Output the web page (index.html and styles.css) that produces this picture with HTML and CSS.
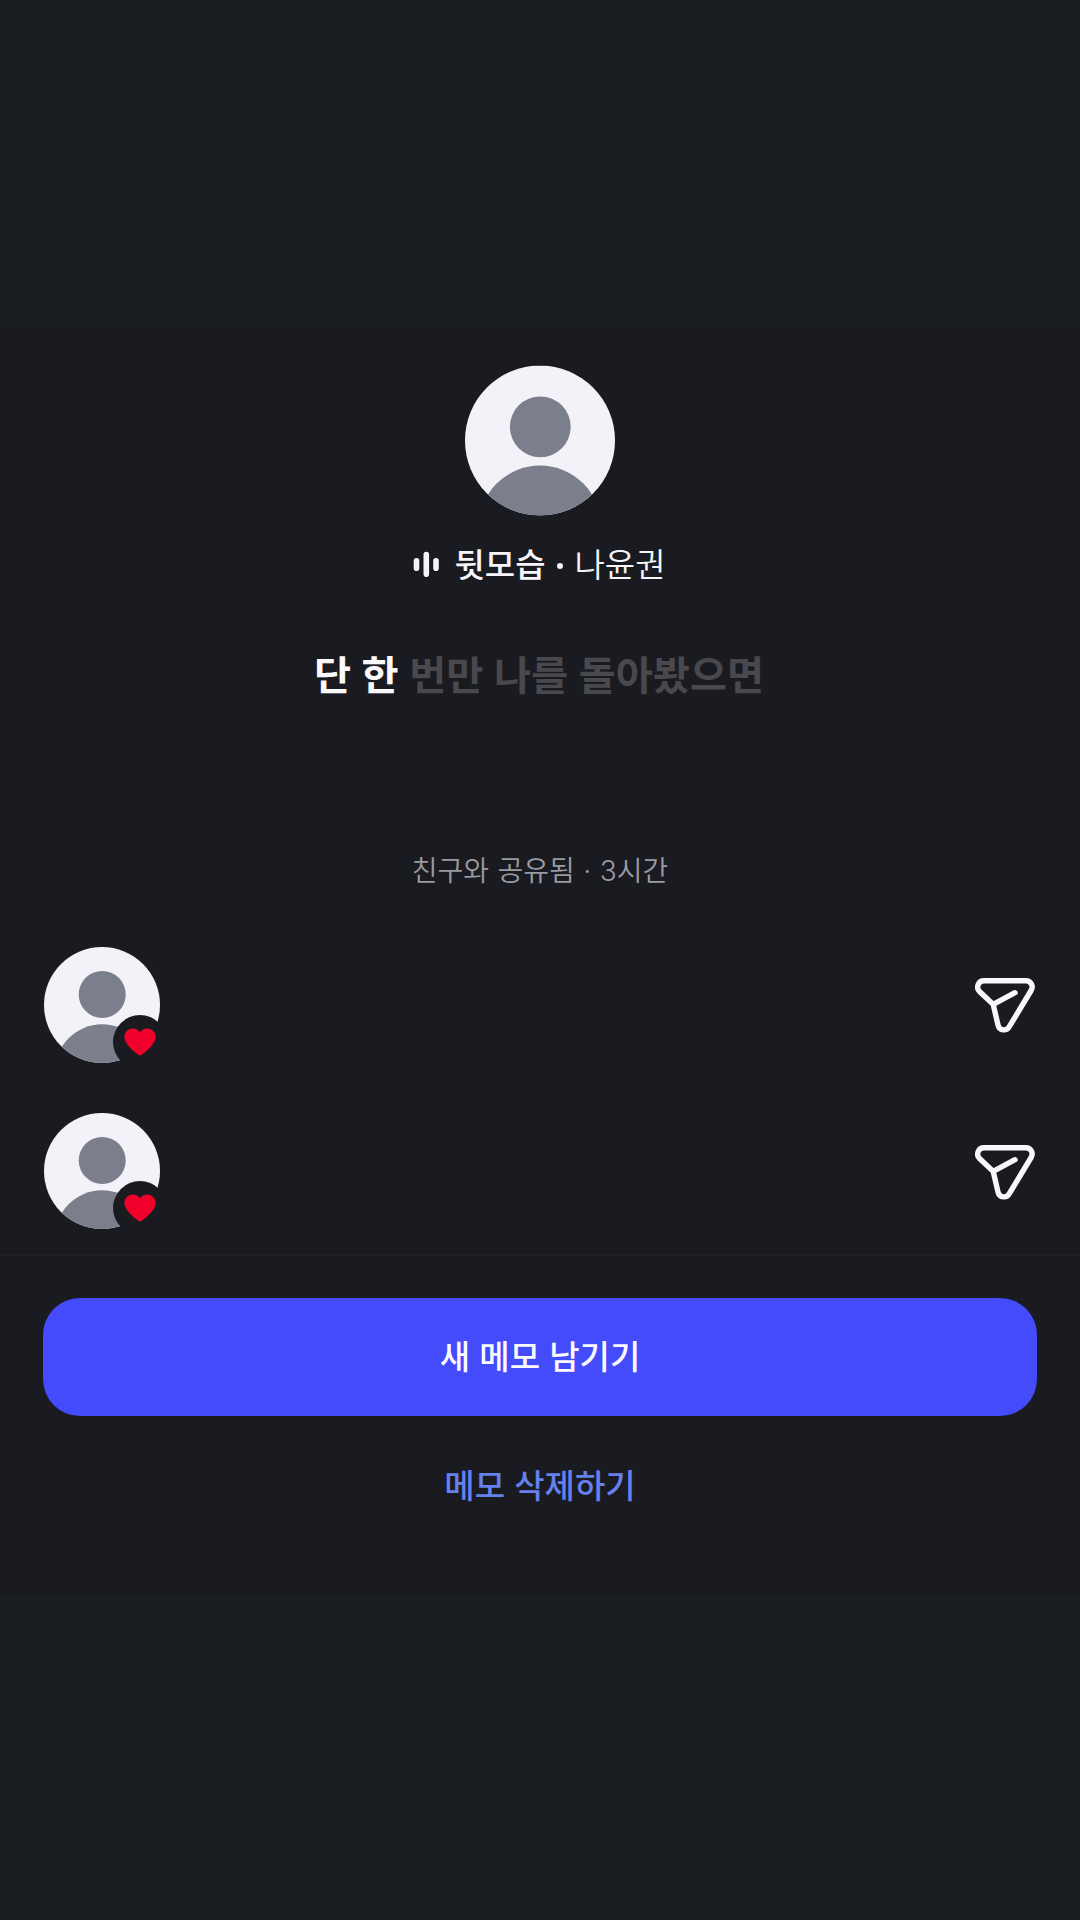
FILE: index.html
```html
<!DOCTYPE html>
<html lang="ko">
<head>
<meta charset="utf-8">
<title>메모</title>
<link rel="stylesheet" href="styles.css">
</head>
<body>
<svg class="defs" aria-hidden="true">
  <symbol id="person" viewBox="0 0 150 150">
    <clipPath id="round"><circle cx="75" cy="75" r="75"/></clipPath>
    <g clip-path="url(#round)">
      <rect width="150" height="150" fill="#f3f2f8"/>
      <circle cx="75.3" cy="61.3" r="30.4" fill="#7b7e8b"/>
      <circle cx="75" cy="161" r="61" fill="#7b7e8b"/>
    </g>
  </symbol>
  <symbol id="send" viewBox="0 0 60 55">
    <path d="M9 2.8H51C56 2.8 58.7 8.2 56.1 12.5L34.3 48.7C31.5 53.5 24.5 52.8 23.1 47.3L18.2 26.4L4.5 13.5C0.6 9.4 3.4 2.8 9 2.8ZM18.2 26.4L40 14.7" fill="none" stroke="#f8f8fc" stroke-width="5.4" stroke-linecap="round" stroke-linejoin="round"/>
  </symbol>
  <symbol id="heart" viewBox="0 0 32 28">
    <path d="M16 27.5C14.5 27.5 1 17.5 .5 9.5C.2 4 4 .5 8.5 .5C12 .5 14.500 2 16 4.500C17.500 2 20 .5 23.500 .5C28 .5 31.800 4 31.500 9.500C31 17.500 17.500 27.500 16 27.500Z" fill="#f1002c"/>
  </symbol>
</svg>
<main class="sheet">
  <svg class="avatar avatar-large"><use href="#person"/></svg>
  <div class="track">
    <svg class="wave" viewBox="0 0 26 26"><path d="M3.500 9.800V17.200M13.300 3.500V23.300M23 9.800V17.200" stroke="#f5f5f9" stroke-width="5.600" stroke-linecap="round"/></svg>
    <span class="song">뒷모습</span><span class="dot"></span><span class="artist">나윤권</span>
  </div>
  <p class="lyric"><span class="sung">단 한</span> 번만 나를 돌아봤으면</p>
  <p class="meta">친구와 공유됨 · 3시간</p>
  <ul class="friends">
    <li class="friend">
      <div class="reaction"><svg class="avatar"><use href="#person"/></svg><span class="badge"><svg class="heart"><use href="#heart"/></svg></span></div>
      <svg class="send"><use href="#send"/></svg>
    </li>
    <li class="friend">
      <div class="reaction"><svg class="avatar"><use href="#person"/></svg><span class="badge"><svg class="heart"><use href="#heart"/></svg></span></div>
      <svg class="send"><use href="#send"/></svg>
    </li>
  </ul>
  <footer class="actions">
    <button class="primary">새 메모 남기기</button>
    <button class="remove">메모 삭제하기</button>
  </footer>
</main>
</body>
</html>
```
FILE: styles.css
```css
* { box-sizing: border-box; margin: 0; padding: 0; }
body {
  height: 1920px;
  padding-top: 328px;
  background: #1a1e20;
  color: #f5f5f9;
  font-family: "Noto Sans CJK KR", sans-serif;
  overflow: hidden;
}
.defs { position: absolute; width: 0; height: 0; }
.sheet {
  display: flex;
  flex-direction: column;
  align-items: center;
  height: 1269px;
  padding-top: 37px;
  background: #1a1b20;
}
.avatar { display: block; width: 116px; height: 116px; }
.avatar-large { width: 150px; height: 151px; }
.track {
  display: flex;
  align-items: center;
  height: 48px;
  margin-top: 24px;
  padding-right: 1px;
  font-size: 33px;
  line-height: 46px;
  white-space: nowrap;
}
.wave { width: 26px; height: 26px; margin-right: 15px; }
.song { font-weight: 500; }
.song, .artist { padding-bottom: 2px; }
.dot { width: 6px; height: 6px; margin: 4px 12px 0 11px; border-radius: 50%; background: #f5f5f9; }
.artist { font-weight: 350; }
.lyric {
  height: 60px;
  margin-top: 55px;
  padding-right: 2px;
  font-size: 40.300px;
  font-weight: 700;
  line-height: 60px;
  word-spacing: -0.700px;
  color: #48484d;
  white-space: nowrap;
}
.sung { color: #fafafd; }
.meta {
  height: 40px;
  margin-top: 148px;
  font-family: Inter, "Noto Sans CJK KR", sans-serif;
  font-size: 28px;
  font-weight: 350;
  line-height: 40px;
  word-spacing: 0.700px;
  color: #9a9aa2;
  white-space: nowrap;
}
.friends {
  display: flex;
  flex-direction: column;
  gap: 50.500px;
  width: 100%;
  margin-top: 55.500px;
  padding: 0 45px 0 44px;
  list-style: none;
}
.friend { display: flex; justify-content: space-between; align-items: center; height: 116px; }
.reaction { position: relative; width: 116px; height: 116px; }
.badge {
  position: absolute;
  left: 69px;
  top: 68px;
  display: flex;
  align-items: center;
  justify-content: center;
  width: 54px;
  height: 54px;
  border-radius: 50%;
  background: #1a1b20;
}
.heart { width: 32px; height: 28px; }
.send { width: 60px; height: 55px; margin-top: 2px; }
.actions {
  display: flex;
  flex-direction: column;
  align-items: center;
  width: 100%;
  margin-top: 25px;
  padding: 42px 43px 0;
  border-top: 2px solid #1f2024;
}
button { border: 0; background: none; font: 500 33px/48px "Noto Sans CJK KR", sans-serif; }
.primary { width: 100%; height: 118px; padding-bottom: 4px; border-radius: 37px; background: #434bfb; color: #fafaff; }
.remove { height: 60px; margin-top: 38px; padding: 0 20px; color: #6680ee; }
```
